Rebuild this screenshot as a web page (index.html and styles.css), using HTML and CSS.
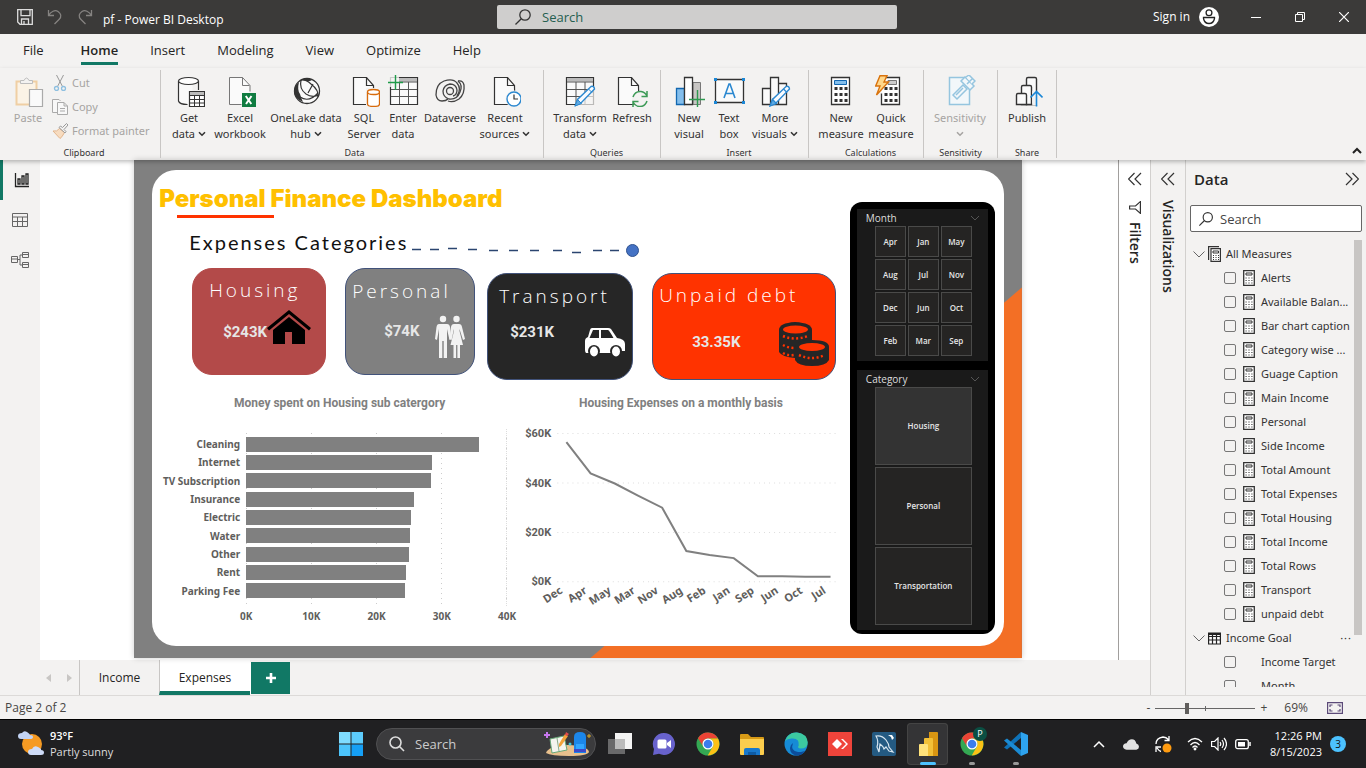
FILE: index.html
```html
<!DOCTYPE html>
<html lang="en">
<head>
<meta charset="utf-8">
<title>pf - Power BI Desktop</title>
<link rel="stylesheet" href="styles.css">
</head>
<body>
<svg class="defs" aria-hidden="true">
  <symbol id="calc" viewBox="0 0 12 16"><path d="M.7.7h10.6v14.6H.7z" fill="#fff" stroke="#333" stroke-width="1.3"/><path d="M3 3h6v2H3z" fill="none" stroke="#333"/><path d="M2.5 8h7M2.5 10.5h7M2.5 13h7" stroke="#444" stroke-width="1.2" stroke-dasharray="1.2 1.7"/></symbol>
  <symbol id="down" viewBox="0 0 8 6"><path d="M1 1.2l3 3 3-3" fill="none" stroke="currentColor" stroke-width="1.6"/></symbol>
  <symbol id="page" viewBox="0 0 32 32"><path d="M25.500 12v-1.500l-7-8h-13v27h20.500z" fill="#fafafa" stroke="#333" stroke-width="1.200"/><path d="M18.500 2.500v8h7" fill="none" stroke="#333" stroke-width="1.200"/></symbol>
  <symbol id="pencil" viewBox="0 0 22 22"><path d="M1.500 20.500l2-6L17 1.500q3-1 3.500 2.500L7 18z" fill="#f8fbff" stroke="#2b88d0" stroke-width="1.400"/><path d="M1 21l2.500-6.500 4 4z" fill="#5fa9e2" stroke="#2b88d0"/><path d="M14.500 4l3.500 3.500" stroke="#2b88d0"/></symbol>
  <symbol id="lens" viewBox="0 0 18 18"><circle cx="11" cy="7" r="5.200" fill="none" stroke="currentColor" stroke-width="1.300"/><path d="M7.300 10.700L1.500 16.500" stroke="currentColor" stroke-width="1.300"/></symbol>
  <symbol id="chrome" viewBox="0 0 24 24"><circle cx="12" cy="12" r="11.500" fill="#34a853"/><path d="M2 6.200A11.500 11.500 0 0 1 22 6.500H12A5.500 5.500 0 0 0 7.200 14.700z" fill="#ea4335"/><path d="M22 6.500A11.500 11.500 0 0 1 11.700 23.500L16.800 14.700A5.500 5.500 0 0 0 12 6.500z" fill="#fbc116"/><circle cx="12" cy="12" r="5.500" fill="#fff"/><circle cx="12" cy="12" r="4.300" fill="#3b7ded"/></symbol>
  <symbol id="chevs" viewBox="0 0 14 14"><path d="M6.500 1l-6 6 6 6M13 1L7 7l6 6" fill="none" stroke="#333" stroke-width="1.200"/></symbol>
</svg>

<header class="titlebar">
  <div class="title-left">
    <button class="tb" aria-label="Save"><svg width="16" height="16" viewBox="0 0 16 16" fill="none" stroke="#ddd" stroke-width="1.300"><path d="M.7.700h14.600v14.600H3L.700 13z"/><path d="M4 .700v6h9v-6M4.500 15v-5h7v5M7 12v3"/></svg></button>
    <button class="tb" aria-label="Undo"><svg width="16" height="16" viewBox="0 0 16 16" fill="none" stroke="#858381" stroke-width="1.300"><path d="M1.500 1v5.500H7M1.500 6.500C4 2.500 8 .500 11 2.500s4 5 1 8L7.500 15"/></svg></button>
    <button class="tb" aria-label="Redo"><svg width="16" height="16" viewBox="0 0 16 16" fill="none" stroke="#858381" stroke-width="1.300"><path d="M14.500 1v5.500H9M14.500 6.500C12 2.500 8 .500 5 2.500s-4 5-1 8L8.500 15"/></svg></button>
    <span class="doc-name">pf - Power BI Desktop</span>
  </div>
  <label class="top-search"><svg width="18" height="18"><use href="#lens"/></svg><input type="text" placeholder="Search" aria-label="Search"></label>
  <div class="title-right">
    <button class="tb signin">Sign in <svg width="20" height="20" viewBox="0 0 20 20"><circle cx="10" cy="10" r="10" fill="#fff"/><circle cx="10" cy="5.700" r="2.900" fill="none" stroke="#222" stroke-width="1.300"/><path d="M4.500 10.500h11v1q-1 5-5.500 5t-5.500-5z" fill="none" stroke="#222" stroke-width="1.300"/></svg></button>
    <button class="tb" aria-label="Minimize"><svg width="10" height="10"><path d="M0 5.500h10" stroke="#fff"/></svg></button>
    <button class="tb" aria-label="Restore"><svg width="10" height="10" fill="none" stroke="#fff"><path d="M.5 2.500h7v7h-7zM2.500 2.500v-2h7v7h-2"/></svg></button>
    <button class="tb" aria-label="Close"><svg width="10" height="10" stroke="#fff" stroke-width="1.200"><path d="M0 0l10 10M10 0L0 10"/></svg></button>
  </div>
</header>

<nav class="menu">
  <a href="#" class="file">File</a><a href="#" class="on">Home</a><a href="#">Insert</a><a href="#">Modeling</a><a href="#">View</a><a href="#">Optimize</a><a href="#">Help</a>
</nav>

<section class="ribbon">
  <div class="group clip">
    <div class="tools">
      <button class="cmd w-s off"><svg width="32" height="32" viewBox="0 0 32 32"><path d="M4.500 6.500h20v23h-20z" fill="#fbf3e6" stroke="#f0cfa4" stroke-width="2"/><path d="M8.500 8.500v-3h3.500q2.500-5 5 0h3.500v3z" fill="#f3f2f1" stroke="#bdbdbd"/><path d="M17.500 14.500h13v17h-13z" fill="#fafafa" stroke="#aaa" stroke-width="1.200"/></svg>Paste</button>
      <div class="stack">
        <button class="row off"><svg width="16" height="16" viewBox="0 0 16 16" fill="none"><path d="M4.500 0l6 11.500M11.500 0l-6 11.500" stroke="#999"/><circle cx="4.500" cy="13.500" r="2" stroke="#8dbfe0" stroke-width="1.300"/><circle cx="11.500" cy="13.500" r="2" stroke="#8dbfe0" stroke-width="1.300"/></svg>Cut</button>
        <button class="row off"><svg width="16" height="16" viewBox="0 0 16 16" fill="#f8f8f8" stroke="#aaa"><path d="M6 13.500H.5v-13h6.500l1.500 1.500"/><path d="M5.500 3.500h6.500l3.500 3.500v8.500h-10zM12 3.500v3.500h3.500M8 9.500h5M8 12h5"/></svg>Copy</button>
        <button class="row off"><svg width="16" height="16" viewBox="0 0 16 16"><path d="M1 8q4 1 6.500-2.500l5 4Q9.500 15 8 15.500z" fill="#f7dcc0" stroke="#e3b58c"/><path d="M7 4.500l6 5.500 1-1.500-2-2L16 2l-1.500-1.500-4 4-2-1.500z" fill="#f3f2f1" stroke="#999"/></svg>Format painter</button>
      </div>
    </div>
    <div class="caption">Clipboard</div>
  </div>

  <div class="group data">
    <div class="tools">
      <button class="cmd w-m"><svg width="32" height="32" viewBox="0 0 32 32"><path d="M5.500 6v20q0 3.500 10 3.500h4V6" fill="#fafafa"/><path d="M25.500 15V6M5.500 6v20q1 3.500 9 3.500" fill="none" stroke="#333" stroke-width="1.200"/><ellipse cx="15.500" cy="6" rx="10" ry="3.500" fill="#fff" stroke="#333" stroke-width="1.200"/><path d="M16.500 16.500h15v15h-15z" fill="#fff" stroke="#333" stroke-width="1.200"/><path d="M17 17h14v3H17z" fill="#bbb"/><path d="M16.500 20.500h15M16.500 24.500h15M16.500 28h15M21.500 20v11M26.500 20v11" stroke="#333"/></svg>Get<span>data <svg width="8" height="6"><use href="#down"/></svg></span></button>
      <button class="cmd w-l"><svg width="32" height="32" viewBox="0 0 32 32"><path d="M17.500 29.500h-12v-27h13l7.500 8v6" fill="#fafafa" stroke="#777"/><path d="M18.500 2.500v8h7" fill="none" stroke="#777"/><path d="M18 18h14v14H18z" fill="#107c41"/><path d="M21.800 21l5.500 8M27.500 21L22 29" stroke="#fff" stroke-width="2"/></svg>Excel<span>workbook</span></button>
      <button class="cmd w-xl"><svg width="32" height="32" viewBox="0 0 32 32"><circle cx="17" cy="16" r="12.500" fill="#fafafa" stroke="#333" stroke-width="1.300"/><path d="M9 7q-2 8 1 12 1 4 3 8-8-3-9-10 0-6 5-10z" fill="#333"/><path d="M11 5q6-4 11 0-3 2-6 1-3-1-5-1z" fill="#333"/><path d="M11 5q-2 9 5 14 6 4 13 1M10 22q9 6 18-4M11 5q5-1 10 4 8 6 7 13M18 18l5-9" fill="none" stroke="#333" stroke-width="1.200"/></svg>OneLake data<span>hub <svg width="8" height="6"><use href="#down"/></svg></span></button>
      <button class="cmd w-s"><svg width="32" height="32" viewBox="0 0 32 32"><use href="#page"/><path d="M18 13h15v19H18z" fill="#f3f2f1"/><path d="M19.500 17v12q0 2.500 6 2.500t6-2.500V17" fill="#fff" stroke="#d86b0c" stroke-width="1.300"/><ellipse cx="25.500" cy="17" rx="6" ry="2.500" fill="#fff" stroke="#d86b0c" stroke-width="1.300"/></svg>SQL<span>Server</span></button>
      <button class="cmd w-s"><svg width="32" height="32" viewBox="0 0 32 32"><path d="M3.500 2.500h27v27h-27z" fill="#fafafa" stroke="#333" stroke-width="1.200"/><path d="M12 3h18v3.500H12z" fill="#bbb"/><path d="M12 7h18M4 14.500h26M4 21.500h26M12.500 8v21M21.500 7v22" stroke="#555"/><path d="M0 0h12v12H0z" fill="#f3f2f1" opacity=".8"/><path d="M8.500 0v15M1 7.500h15" stroke="#1f9a49" stroke-width="1.400"/></svg>Enter<span>data</span></button>
      <button class="cmd w-l"><svg width="32" height="32" viewBox="0 0 32 32" fill="none" stroke="#444" stroke-width="1.300"><circle cx="16" cy="16" r="3.500"/><path d="M24 6q5 4 2 11-3 8-11 7-6-2-6-8 1-6 7-7 6 0 7 6 0 5-4 6"/><path d="M8 26q-5 0-6-6Q2 9 10 6q9-3 13 2 5 6 0 13"/><path d="M24 6q5-1 6 4 1 9-5 14-6 4-11 2M8 26q4 0 6-2"/></svg>Dataverse</button>
      <button class="cmd w-l"><svg width="32" height="32" viewBox="0 0 32 32"><use href="#page"/><circle cx="25" cy="24" r="8.500" fill="#f3f2f1"/><circle cx="25" cy="24" r="7" fill="#fff" stroke="#2b88d0" stroke-width="1.400"/><path d="M25 19.500V24h4" fill="none" stroke="#333" stroke-width="1.200"/></svg>Recent<span>sources <svg width="8" height="6"><use href="#down"/></svg></span></button>
    </div>
    <div class="caption">Data</div>
  </div>

  <div class="group queries">
    <div class="tools">
      <button class="cmd w-l"><svg width="32" height="32" viewBox="0 0 32 32"><path d="M2.500 2.500h27v27h-27z" fill="#fafafa" stroke="#333" stroke-width="1.200"/><path d="M3 3h26v3.500H3z" fill="#bbb"/><path d="M3 7h26M3 14.500h26M3 21.500h26M12 7v22M21 7v22" stroke="#555"/><path d="M14 27l12-13h6v18H14z" fill="#f3f2f1" opacity=".7"/><svg x="10" y="10" width="22" height="22"><use href="#pencil"/></svg></svg>Transform<span>data <svg width="8" height="6"><use href="#down"/></svg></span></button>
      <button class="cmd w-s"><svg width="32" height="32" viewBox="0 0 32 32"><use href="#page" x="-3"/><circle cx="24" cy="24" r="8" fill="#f3f2f1"/><path d="M17 22q2-6 8-5.500 4 .500 6 4.500M31 26q-2 6-8 5.500-4-.500-6-4.500M31 16v5.500h-5.500M17 32v-5.500h5.500" fill="none" stroke="#3c9a56" stroke-width="1.500"/></svg>Refresh</button>
    </div>
    <div class="caption">Queries</div>
  </div>

  <div class="group insert">
    <div class="tools">
      <button class="cmd w-s"><svg width="32" height="32" viewBox="0 0 32 32"><path d="M3.500 13.500h8v16h-8z" fill="#83beec" stroke="#1267b0" stroke-width="1.300"/><path d="M20 7.500h7.500v22H20z" fill="#c8c6c4" stroke="#777"/><path d="M11.500 2.500h8v27h-8z" fill="#fff" stroke="#333" stroke-width="1.300"/><path d="M24.500 15v17M16 24.500h17" stroke="#2e9a50" stroke-width="1.400"/></svg>New<span>visual</span></button>
      <button class="cmd w-s"><svg width="32" height="32" viewBox="0 0 32 32"><path d="M2.500 4.500h28v23h-28z" fill="#fafafa" stroke="#333" stroke-width="1.300"/><path d="M1 3h3v3H1zM29 3h3v3h-3zM1 26h3v3H1zM29 26h3v3h-3z" fill="#1b87d6"/><path d="M11 23l5-14h1l5 14M12.500 18.500h8" fill="none" stroke="#2b88d0" stroke-width="1.600"/></svg>Text<span>box</span></button>
      <button class="cmd w-l"><svg width="32" height="32" viewBox="0 0 32 32" fill="#fafafa" stroke="#333" stroke-width="1.300"><path d="M3.500 13.500h8v16h-8zM19.500 8.500h8v21h-8zM11.500 2.500h8v27h-8z"/><svg x="10" y="10" width="22" height="22"><use href="#pencil"/></svg></svg>More<span>visuals <svg width="8" height="6"><use href="#down"/></svg></span></button>
    </div>
    <div class="caption">Insert</div>
  </div>

  <div class="group calcs">
    <div class="tools">
      <button class="cmd w-m"><svg width="32" height="32" viewBox="0 0 32 32"><path d="M6.500 2.500h18v27h-18z" fill="#fff" stroke="#333" stroke-width="1.300"/><path d="M9.500 5.500h12v4h-12z" fill="#83beec" stroke="#1267b0"/><path d="M9.500 13.500h13M9.500 19.500h13M9.500 25.500h13" stroke="#333" stroke-width="3" stroke-dasharray="3 2"/></svg>New<span>measure</span></button>
      <button class="cmd w-m"><svg width="32" height="32" viewBox="0 0 32 32"><path d="M8.500 2.500h16v27h-18v-11" fill="#fff" stroke="#333" stroke-width="1.300"/><path d="M13 5.500h8.500v4H13z" fill="#ccc" stroke="#777"/><path d="M9.500 13.500h13M9.500 19.500h13M9.500 25.500h13" stroke="#333" stroke-width="3" stroke-dasharray="3 2"/><path d="M5 .700h7L9 7h4.500L1.500 20 5 11H.700z" fill="#ffd78a" stroke="#d9730d" stroke-width="1.400"/></svg>Quick<span>measure</span></button>
    </div>
    <div class="caption">Calculations</div>
  </div>

  <div class="group sens">
    <div class="tools">
      <button class="cmd w-l off"><svg width="32" height="32" viewBox="0 0 32 32" fill="#f2f7fa" stroke="#95c5df" stroke-width="1.500"><path d="M5.500 2.500h20v27h-20z"/><path d="M9 20L19 10l4 4-10 10zM12 20l7-7"/><path d="M17 6l4-4 9 9-4 4z"/><path d="M22 2l3-2 6 6-3 3M23 9l5-5" /></svg>Sensitivity<span><svg width="8" height="6"><use href="#down"/></svg></span></button>
    </div>
    <div class="caption">Sensitivity</div>
  </div>

  <div class="group share">
    <div class="tools">
      <button class="cmd w-s"><svg width="32" height="32" viewBox="0 0 32 32" fill="#fafafa" stroke="#333" stroke-width="1.400"><path d="M15.500 29.500V4q0-1.500 1.500-1.500h7q1.500 0 1.500 1.500v25.500z"/><path d="M10.500 29.500V12q0-1.500 1.500-1.500h7q1.500 0 1.500 1.500v17.500z"/><path d="M5.500 29.500V20q0-1.500 1.500-1.500h7q1.500 0 1.500 1.500v9.500z"/><path d="M21.200 16h10v14h-10z" fill="#f3f2f1" stroke="none"/><path d="M25.500 31.500V17M19.500 22.500l6-6 6 6" fill="none" stroke="#1b87d6" stroke-width="1.600"/></svg>Publish</button>
    </div>
    <div class="caption">Share</div>
  </div>
  <button class="collapse" aria-label="Collapse ribbon"><svg width="10" height="7"><path d="M1 6l4-4 4 4" fill="none" stroke="#222" stroke-width="2"/></svg></button>
</section>

<main class="work">
  <div class="left">
    <div class="upper">
      <nav class="rail">
        <button class="on" aria-label="Report view"><svg width="16" height="16" viewBox="0 0 16 16" fill="none" stroke="#222" stroke-width="1.300"><path d="M1.500 1v13.500H15M4 7h2v5H4zM8 4h2v8H8zM12 2h2v10h-2z"/></svg></button>
        <button aria-label="Table view"><svg width="16" height="16" viewBox="0 0 16 16" fill="none" stroke="#666"><path d="M.5 1.500h15v13H.5zM.5 5h15M.5 9.500h15M5.500 5v9.500M10.500 5v9.500"/></svg></button>
        <button aria-label="Model view"><svg width="18" height="18" viewBox="0 0 18 18" fill="none" stroke="#666"><path d="M.5 5.500h6v6h-6zM.5 8h6M11.500 1.500h6v5h-6zM11.500 11.500h6v5h-6zM11.500 3.500h6M11.500 13.500h6M6.500 8.500H9M11.500 4H9v10h2.500"/></svg></button>
      </nav>
      <div class="canvas">
        <article class="report">
          <div class="sheet">
            <div class="content">
              <h1>Personal Finance Dashboard</h1>
              <div class="rule"></div>
              <div class="sub"><h2>Expenses Categories</h2>
                <svg width="230" height="32" viewBox="0 0 230 32"><path d="M1 21.500h9M19 21.500h9M37 20.500h9M57 21.500h9M78 22.500h9M98 22.500h9M119 22.500h9M142 22.500h9M161 24.500h9M182 22.500h9M199 22.500h9" stroke="#2b4570" stroke-width="1.600"/><circle cx="221.500" cy="22.500" r="6" fill="#4472c4" stroke="#2f528f"/></svg></div>
              <div class="kpis">
                <section class="kpi housing"><h3>Housing</h3><div class="val"><b>$243K</b><svg width="44" height="36" viewBox="0 0 44 36"><path d="M22 0L0 18l2 2.500L22 4l20 16.500 2-2.500zM22 7L6 20v14h12V22h7v12h13V20z"/></svg></div></section>
                <section class="kpi personal"><h3>Personal</h3><div class="val"><b>$74K</b><svg width="30" height="44" viewBox="0 0 30 44" fill="#f2f2f2"><circle cx="8" cy="4" r="3.200"/><path d="M4 9h8q2.500 0 3 3l1.500 12-2 1L12 14v29H8.700V26H7.300v17H4V14L2 25l-2-1 1.500-12Q2 9 4 9z"/><circle cx="21.500" cy="4" r="3.200"/><path d="M19 9h5q2.500 0 3 3l3 12-2 1-3.500-11v2l3.500 14h-3v13h-2.600V30h-1.300v13H18.500V30h-3L19 16v-2l-2.500 11-2-1L16 12q.500-3 3-3z"/></svg></div></section>
                <section class="kpi transport"><h3>Transport</h3><div class="val"><b>$231K</b><svg width="40" height="30" viewBox="0 0 40 30"><path d="M7 1h16q2 0 3 1l6 9q8 1 8 6v7h-5v2H1q-1-1-1-3v-9q0-3 3-4L5 3q.500-2 2-2z" fill="#fff"/><path d="M8 3h6v8H4.500zM16 3h7q1 0 5.500 8H16z" fill="#262626"/><circle cx="9" cy="24" r="6" fill="#262626"/><circle cx="31" cy="24" r="6" fill="#262626"/><ellipse cx="9" cy="24.500" rx="4" ry="5" fill="#fff"/><ellipse cx="31" cy="24.500" rx="4" ry="5" fill="#fff"/></svg></div></section>
                <section class="kpi debt"><h3>Unpaid debt</h3><div class="val"><b>33.35K</b><svg width="50" height="44" viewBox="0 0 50 44"><g fill="#262626"><path d="M0 8q0-7 16-8 17 1 17 8v20q-5 8-17 8Q3 35 0 30z"/><path d="M16 25q0-7 17-7t17 7v13q-3 6-17 6t-17-6z"/></g><g fill="#ff3300"><ellipse cx="16.500" cy="7.500" rx="12.500" ry="4"/><ellipse cx="33" cy="25" rx="13" ry="4"/></g><path d="M4 14q12 5 25 0M4 23q5 3 12 3M4 31q5 3 11 2M20 33q13 6 26 0" fill="none" stroke="#ff3300" stroke-width="2.500" stroke-dasharray="2 2.500"/></svg></div></section>
              </div>
              <div class="charts">
                <figure class="bars">
                  <figcaption>Money spent on Housing sub catergory</figcaption>
                  <div class="plot">
                    <div class="names"><span>Cleaning</span><span>Internet</span><span>TV Subscription</span><span>Insurance</span><span>Electric</span><span>Water</span><span>Other</span><span>Rent</span><span>Parking Fee</span></div>
                    <div class="area"><i style="width:89.5%"></i><i style="width:71.7%"></i><i style="width:71.3%"></i><i style="width:64.7%"></i><i style="width:63.3%"></i><i style="width:63%"></i><i style="width:62.5%"></i><i style="width:61.5%"></i><i style="width:61.1%"></i></div>
                  </div>
                  <div class="axis"><span>0K</span><span>10K</span><span>20K</span><span>30K</span><span>40K</span></div>
                </figure>
                <figure class="trend">
                  <figcaption>Housing Expenses on a monthly basis</figcaption>
                  <svg viewBox="0 0 325 190">
                    <path d="M39 13.500h280M39 62.500h280M39 111.500h280M39 160.500h280" stroke="#ddd" stroke-dasharray="1 4"/>
                    <path d="M48 22l24 31 24 10 23 12 24 12 24 43 23 4 24 3 24 18h24l23 .500h25" fill="none" stroke="#808080" stroke-width="2"/>
                    <g class="yt"><text x="33" y="17">$60K</text><text x="33" y="66">$40K</text><text x="33" y="115">$20K</text><text x="33" y="164">$0K</text></g>
                    <g class="xt"><text transform="translate(45 171) rotate(-33)">Dec</text><text transform="translate(69 171) rotate(-33)">Apr</text><text transform="translate(93 171) rotate(-33)">May</text><text transform="translate(117 171) rotate(-33)">Mar</text><text transform="translate(140 171) rotate(-33)">Nov</text><text transform="translate(164 171) rotate(-33)">Aug</text><text transform="translate(187 171) rotate(-33)">Feb</text><text transform="translate(211 171) rotate(-33)">Jan</text><text transform="translate(235 171) rotate(-33)">Sep</text><text transform="translate(259 171) rotate(-33)">Jun</text><text transform="translate(283 171) rotate(-33)">Oct</text><text transform="translate(306 171) rotate(-33)">Jul</text></g>
                  </svg>
                </figure>
              </div>
            </div>
            <aside class="slicers">
              <section class="slicer"><header>Month<svg width="10" height="6"><path d="M1 1l4 4 4-4" fill="none" stroke="#555"/></svg></header>
                <div class="months"><button>Apr</button><button>Jan</button><button>May</button><button>Aug</button><button>Jul</button><button>Nov</button><button>Dec</button><button>Jun</button><button>Oct</button><button>Feb</button><button>Mar</button><button>Sep</button></div></section>
              <section class="slicer grow"><header>Category<svg width="10" height="6"><path d="M1 1l4 4 4-4" fill="none" stroke="#555"/></svg></header>
                <div class="cats"><button class="on">Housing</button><button>Personal</button><button>Transportation</button></div></section>
            </aside>
          </div>
        </article>
      </div>
      <aside class="pane filters"><button aria-label="Expand filters"><svg width="14" height="14"><use href="#chevs"/></svg></button>
        <svg width="12" height="13" viewBox="0 0 12 13"><path d="M11.400.600v11.800L6.500 8H.6V5h5.900z" fill="none" stroke="#333" stroke-width="1.200"/></svg><h2>Filters</h2></aside>
    </div>
    <nav class="pages">
      <div class="arrows"><button aria-label="Previous page"><svg width="5" height="8"><path d="M5 0v8L0 4z" fill="#c8c6c4"/></svg></button><button aria-label="Next page"><svg width="5" height="8"><path d="M0 0v8l5-4z" fill="#c8c6c4"/></svg></button></div>
      <button class="tab inc">Income</button><button class="tab exp">Expenses</button><button class="add" aria-label="New page"><svg width="10" height="10"><path d="M5 0v10M0 5h10" stroke="#fff" stroke-width="2.600"/></svg></button>
    </nav>
  </div>
  <aside class="pane viz"><button aria-label="Expand visualizations"><svg width="14" height="14"><use href="#chevs"/></svg></button><h2>Visualizations</h2></aside>
  <aside class="datapane">
    <header><h2>Data</h2><button aria-label="Collapse data"><svg class="flip" width="14" height="14"><use href="#chevs"/></svg></button></header>
    <label class="find"><svg width="16" height="16"><use href="#lens"/></svg><input type="text" placeholder="Search" aria-label="Search fields"></label>
    <div class="treewrap">
      <div class="tree">
        <div class="node"><svg class="tw" width="12" height="7"><path d="M.5.500L6 6l5.500-5.500" fill="none" stroke="#666"/></svg><svg width="13" height="16" viewBox="0 0 13 16"><path d="M.6 14V.600H11" fill="none" stroke="#333" stroke-width="1.200"/><path d="M3 2.700h9.400v12.700H3z" fill="#fff" stroke="#333" stroke-width="1.200"/><path d="M5 5h5.500v2H5z" fill="none" stroke="#333"/><path d="M5 9.500h6M5 11.500h6M5 13.500h6" stroke="#333" stroke-dasharray="1 1.500"/></svg>All Measures</div>
        <label><input type="checkbox"><svg width="12" height="16"><use href="#calc"/></svg>Alerts</label>
        <label><input type="checkbox"><svg width="12" height="16"><use href="#calc"/></svg>Available Balan...</label>
        <label><input type="checkbox"><svg width="12" height="16"><use href="#calc"/></svg>Bar chart caption</label>
        <label><input type="checkbox"><svg width="12" height="16"><use href="#calc"/></svg>Category wise ...</label>
        <label><input type="checkbox"><svg width="12" height="16"><use href="#calc"/></svg>Guage Caption</label>
        <label><input type="checkbox"><svg width="12" height="16"><use href="#calc"/></svg>Main Income</label>
        <label><input type="checkbox"><svg width="12" height="16"><use href="#calc"/></svg>Personal</label>
        <label><input type="checkbox"><svg width="12" height="16"><use href="#calc"/></svg>Side Income</label>
        <label><input type="checkbox"><svg width="12" height="16"><use href="#calc"/></svg>Total Amount</label>
        <label><input type="checkbox"><svg width="12" height="16"><use href="#calc"/></svg>Total Expenses</label>
        <label><input type="checkbox"><svg width="12" height="16"><use href="#calc"/></svg>Total Housing</label>
        <label><input type="checkbox"><svg width="12" height="16"><use href="#calc"/></svg>Total Income</label>
        <label><input type="checkbox"><svg width="12" height="16"><use href="#calc"/></svg>Total Rows</label>
        <label><input type="checkbox"><svg width="12" height="16"><use href="#calc"/></svg>Transport</label>
        <label><input type="checkbox"><svg width="12" height="16"><use href="#calc"/></svg>unpaid debt</label>
        <div class="node"><svg class="tw" width="12" height="7"><path d="M.5.500L6 6l5.500-5.500" fill="none" stroke="#666"/></svg><svg width="13" height="13" viewBox="0 0 13 13" fill="#fff" stroke="#222" stroke-width="1.200"><path d="M.6 1h11.800v11H.600zM.600 4.500h11.800M.600 8h11.800M4.500 1v11M8.500 1v11"/><path d="M1 2h11" stroke-width="2"/></svg>Income Goal<span class="dots">···</span></div>
        <label><input type="checkbox"><svg width="12" height="16"></svg>Income Target</label>
        <label><input type="checkbox"><svg width="12" height="16"></svg>Month</label>
      </div>
      <div class="scroll"></div>
    </div>
  </aside>
</main>

<footer class="status">
  <span>Page 2 of 2</span>
  <div class="zoom"><button aria-label="Zoom out">-</button><input type="range" min="10" max="200" value="69" aria-label="Zoom"><button aria-label="Zoom in">+</button><span class="pct">69%</span><button aria-label="Fit to page"><svg width="16" height="12" fill="none" stroke="#5b4a78" stroke-width="1.200"><path d="M.6.600h14.800v10.800H.600z"/><path d="M3 5V3h2.500M10.500 3H13v2M13 7v2h-2.500M5.500 9H3V7"/></svg></button></div>
</footer>

<footer class="taskbar">
  <div class="weather"><svg width="26" height="26" viewBox="0 0 26 26"><circle cx="14" cy="13" r="10" fill="#f59a23"/><path d="M3 8q-3 0-3-3t4-3q2-3 5-1t3 3q3 0 3 2t-3 2z" fill="#c3d4f5"/><path d="M13 24q-3 0-3-3t4-3q2-4 6-2t3 3q3 0 3 2.500T23 24z" fill="#cfdcf8"/></svg><p><b>93°F</b><br>Partly sunny</p></div>
  <div class="apps">
    <button class="start" aria-label="Start"><svg width="24" height="24" viewBox="0 0 24 24"><path d="M0 0h11.500v11.500H0z" fill="#7fdcff"/><path d="M12.500 0H24v11.500H12.500z" fill="#5ccbfb"/><path d="M0 12.500h11.500V24H0z" fill="#4cc4fb"/><path d="M12.500 12.500H24V24H12.500z" fill="#159ff5"/></svg></button>
    <label class="task-search"><svg width="16" height="16" viewBox="0 0 16 16" fill="none" stroke="#ddd" stroke-width="1.600"><circle cx="6.500" cy="6.500" r="5.500"/><path d="M10.500 10.500L15 15"/></svg><input type="text" placeholder="Search" aria-label="Search Windows"><svg width="48" height="26" viewBox="0 0 48 26"><path d="M2 22q2-7 22-8 20 1 21 7-2 4-20 4T2 22z" fill="#e8c08d"/><path d="M6 8l14-3 3 14-15 3z" fill="#f4f4ee" stroke="#69a978"/><path d="M13 7l2 13" stroke="#8a8"/><path d="M21 3l3 2-7 10-2 1v-3z" fill="#f2a23a"/><path d="M22 1l3 2-2 2-2-1z" fill="#e34b4b"/><path d="M30 6q0-5 6-5t6 5v16H30z" fill="#1c87ea"/><path d="M32 13h8v8h-8z" fill="#32a6ff"/><path d="M30 18h12v3H30z" fill="#3d48c8"/><path d="M3 1v6M0 4h6" stroke="#c778ee" stroke-width="2"/><path d="M45 3v4M43 5h4" stroke="#e0ae26"/><circle cx="26" cy="13" r="1.500" fill="#3bc6df"/></svg></label>
    <button aria-label="Task view"><svg width="24" height="24" viewBox="0 0 24 24"><path d="M7 1h17v16H7z" fill="#f4f4f4"/><path d="M0 7h17v15H0z" fill="#777" opacity=".85"/><path d="M7 7h10v10H7z" fill="#bbb"/></svg></button>
    <button aria-label="Chat"><svg width="24" height="24" viewBox="0 0 24 24"><path d="M12 1a11 11 0 1 1-5 20.800L1 23l1-6A11 11 0 0 1 12 1z" fill="#6862cc"/><rect x="5.500" y="7.500" width="9" height="9" rx="1.500" fill="#fff"/><path d="M15 11l4-3v8l-4-3z" fill="#fff"/></svg></button>
    <button aria-label="Chrome"><svg width="24" height="24"><use href="#chrome"/></svg></button>
    <button aria-label="File Explorer"><svg width="24" height="24" viewBox="0 0 24 24"><path d="M0 3q0-1 1-1h7l3 3h12q1 0 1 1v3H0z" fill="#d79a16"/><path d="M0 7h24v15q0 1-1 1H1q-1 0-1-1z" fill="#fccd4d"/><path d="M4 23v-5q0-2 2-2h12q2 0 2 2v5z" fill="#1878cc"/><path d="M8 23v-3h8v3z" fill="#0e5ba5"/></svg></button>
    <button aria-label="Edge"><svg width="24" height="24" viewBox="0 0 24 24"><circle cx="12" cy="12" r="11.500" fill="#168bd6"/><path d="M1 9Q4 0 13 .5q10 1 10.700 10 0 6-7 6-4-.500-2-3 1-7-6-7Q4 6 1 9z" fill="#3cc9a0"/><path d="M9 11q-3 8 5 9 6 0 8-2-4 6-10 5.500Q6 22 6 16q0-3 3-5z" fill="#0c4d9b"/></svg></button>
    <button aria-label="AnyDesk"><svg width="24" height="24" viewBox="0 0 24 24"><path d="M0 0h24v24H0z" fill="#ef443b"/><path d="M9 7l5 5-5 5-5-5z" fill="#fff"/><path d="M13 7h2l5 5-5 5h-2l5-5z" fill="#fff"/></svg></button>
    <button aria-label="MySQL Workbench"><svg width="24" height="24" viewBox="0 0 24 24"><rect width="24" height="24" rx="2" fill="#245a82"/><path d="M4 4q6-1 10 4 3 4 3 7l4 5-4-1-3-4-2 2q-1-3-4-5l-1 8-2-5Q7 9 4 4z" fill="none" stroke="#d8e6f0" stroke-width="1.200"/><path d="M16 3l3 2 1 3 2-2-2-3z" fill="#fff"/></svg></button>
    <button class="active" aria-label="Power BI"><svg width="24" height="24" viewBox="0 0 24 24"><path d="M13 0h8q1 0 1 1v23h-9z" fill="#d99612"/><path d="M8 7q0-1 1-1h7q1 0 1 1v17H8z" fill="#f2c037"/><path d="M3 13q0-1 1-1h7q1 0 1 1v11H3z" fill="#ffe27a"/></svg></button>
    <button class="open" aria-label="Chrome profile P"><svg width="30" height="36" viewBox="0 0 30 36"><svg x="3" y="6" width="24" height="24"><use href="#chrome"/></svg><circle cx="23" cy="8" r="7" fill="#0b4f43"/><text x="23" y="11" class="pf">P</text></svg></button>
    <button class="open" aria-label="VS Code"><svg width="24" height="24" viewBox="0 0 24 24"><path d="M17 0l7 3v18l-7 3z" fill="#2ea3ee"/><path d="M17 0v6L3 17.500 0 15.500z" fill="#0e72b8"/><path d="M17 24v-6L3 6.500 0 8.500z" fill="#1b8bd4"/></svg></button>
  </div>
  <div class="tray">
    <svg width="12" height="8"><path d="M1 7l5-5 5 5" fill="none" stroke="#fff" stroke-width="1.500"/></svg>
    <svg class="cloud" width="16" height="11" viewBox="0 0 18 12"><path d="M4 12q-4-1-4-4t4-3.500Q6 0 10 0t5 5q3 1 3 3.500T15 12z" fill="#e2e2e2"/></svg>
    <svg width="18" height="18" viewBox="0 0 18 18" fill="none" stroke="#fff" stroke-width="1.300"><path d="M2 9q0-6 7-7 3 0 6 3M15 1v4.500h-4.500M2 17v-5h5M3 13q2 3 4 3.500"/><circle cx="13" cy="13" r="4.500" fill="#ff9b10" stroke="none"/></svg>
    <svg width="16" height="14" viewBox="0 0 16 14" fill="none" stroke="#fff" stroke-width="1.300"><path d="M1 5q7-7 14 0M3.500 8q4.500-5 9 0M5.500 10.500q2.500-3 5 0"/><circle cx="8" cy="12" r=".8"/></svg>
    <svg width="16" height="14" viewBox="0 0 16 14" fill="none" stroke="#fff" stroke-width="1.200"><path d="M.6 4.500h3L7 1v12L3.600 9.500h-3zM9 5q1.500 2 0 4M11 3q3 4 0 8M13 1q5 6 0 12"/></svg>
    <svg width="16" height="12" viewBox="0 0 16 12"><rect x=".7" y="1.700" width="12.600" height="9" rx="2" fill="none" stroke="#fff" stroke-width="1.300"/><path d="M3 4h7v4.500H3z" fill="#fff"/><path d="M15 4v4" stroke="#fff" stroke-width="1.500"/></svg>
    <p>12:26 PM<br>8/15/2023</p><span class="count">3</span>
  </div>
</footer>
</body>
</html>
```
FILE: styles.css
```css
* { box-sizing: border-box; }
body { margin: 0; height: 100vh; display: flex; flex-direction: column; overflow: hidden; background: #f3f2f1; color: #333; font: 12px/16px "Open Sans", "Noto Sans", sans-serif; }
button { border: 0; padding: 0; background: none; color: inherit; font: inherit; }
input { font: inherit; color: inherit; border: 0; outline: 0; background: none; min-width: 0; padding: 0; }
h1, h2, h3, p, figure { margin: 0; }
a { color: inherit; text-decoration: none; }
svg { flex: none; display: block; }
.defs { position: absolute; width: 0; height: 0; }
.flip { transform: scaleX(-1); }

.titlebar { flex: none; height: 34px; display: grid; grid-template-columns: 497px minmax(200px, 400px) 1fr; align-items: center; background: #3b3a39; color: #fff; }
.title-left { display: flex; align-items: center; gap: 14px; padding-left: 17px; }
.doc-name { padding-top: 6px; margin-left: -4px; white-space: nowrap; }
.top-search { height: 24px; display: flex; align-items: center; gap: 10px; padding-left: 17px; border-radius: 2px; background: #cfcecd; color: #333; font-size: 13px; }
.top-search input::placeholder { color: #255f50; opacity: 1; }
.title-right { display: flex; justify-content: flex-end; align-items: center; gap: 34px; padding-right: 17px; }
.signin { display: flex; align-items: center; gap: 9px; margin-right: -2px; }

.menu { flex: none; height: 34px; display: flex; gap: 32px; padding: 4px 0 0 23px; font-size: 13px; color: #252423; }
.menu a { height: 27px; line-height: 24px; }
.menu .file { margin-right: 5px; }
.menu .on { font-weight: 600; border-bottom: 3px solid #117865; }

.ribbon { flex: none; height: 92px; display: flex; padding: 2px 4px 0 8px; position: relative; z-index: 2; box-shadow: 0 2px 4px rgba(0,0,0,.25); font: 11px/16px "Noto Sans", sans-serif; }
.group { height: 88px; display: flex; flex-direction: column; justify-content: space-between; border-right: 1px solid #c8c6c4; }
.tools { display: flex; gap: 1px; padding-top: 5px; }
.caption { text-align: center; font-size: 9px; line-height: 10px; }
.cmd { display: flex; flex-direction: column; align-items: center; white-space: nowrap; }
.cmd > svg { margin-bottom: 3px; }
.cmd span { display: flex; align-items: center; gap: 3px; height: 16px; }
.off { color: #a6a4a2; }
.w-s { width: 38px; }
.w-m { width: 46px; }
.w-l { width: 54px; }
.w-xl { width: 76px; }
.clip { width: 153px; }
.clip .cmd { margin-left: 1px; }
.stack { display: flex; flex-direction: column; gap: 8px; }
.row { display: flex; align-items: center; gap: 4px; height: 16px; white-space: nowrap; margin-left: 4px; }
.data { width: 383px; padding-left: 5px; }
.queries { width: 117px; padding-left: 9px; }
.queries .tools { gap: 6px; }
.insert { width: 148px; padding-left: 9px; }
.insert .tools { gap: 2px; }
.insert .w-l { width: 50px; }
.calcs { width: 115px; padding-left: 9px; }
.calcs .tools { gap: 4px; }
.sens { width: 74px; padding: 0 9px; }
.share { width: 59px; padding: 0 10px; }
.collapse { margin: auto 0 6px auto; }

.work { flex: 1; min-height: 0; display: flex; }
.left { flex: 1; min-width: 0; display: flex; flex-direction: column; }
.upper { flex: 1; min-height: 0; display: flex; }
.rail { width: 40px; display: flex; flex-direction: column; }
.rail button { height: 40px; display: grid; place-items: center; }
.rail .on { border-left: 3px solid #117865; }
.canvas { flex: 1; min-width: 0; display: flex; justify-content: center; background: #fff; padding: 0 2px 2px 0; }
.report { width: 82.5%; display: flex; padding: 10px 18px 12px; position: relative; z-index: 0; background: #808080; box-shadow: 0 0 6px rgba(0,0,0,.2); }
.report::before { content: ""; position: absolute; inset: 0; z-index: -1; background: #f36f25; clip-path: polygon(100% 25.6%, 100% 100%, 51.4% 100%); }
.sheet { flex: 1; min-width: 0; display: grid; grid-template-columns: minmax(0, 1fr) 145px; padding: 0 9px 0 7px; border-radius: 24px; background: #fff; }
.content { padding-top: 15px; }
h1 { font: 900 24px/28px Inter, sans-serif; color: #ffc000; white-space: nowrap; }
.rule { width: 97px; height: 3px; margin: 2px 0 0 18px; background: #ff3300; }
.sub { display: flex; height: 28px; margin: 10px 0 12px 30px; }
.sub h2 { font: 400 20px/28px Lato, sans-serif; letter-spacing: 2px; color: #111; width: 222px; white-space: nowrap; }
.kpis { display: flex; align-items: flex-start; margin-left: 33px; }
.kpi { height: 107px; border-radius: 20px; color: #fff; border: 1px solid #41527a; }
.kpi h3 { font: 300 19px/24px "Open Sans", sans-serif; letter-spacing: 3px; white-space: nowrap; }
.kpi b { font: 700 15px/20px Roboto, sans-serif; color: #e6e6e6; }
.val { display: flex; align-items: flex-start; justify-content: space-between; }
.housing { width: 134px; margin-right: 19px; padding: 9px 14px 0 16px; background: #b34a49; border-color: #b34a49; }
.housing .val { padding: 8px 0 0 14px; }
.housing b { padding-top: 12px; }
.personal { width: 130px; margin-right: 12px; padding: 10px 9px 0 6px; background: #808080; }
.personal .val { padding: 12px 0 0 32px; }
.personal b { padding-top: 6px; }
.transport { width: 146px; margin: 5px 19px 0 0; padding: 10px 7px 0 11px; background: #262626; }
.transport .val { padding: 14px 0 0 11px; }
.transport svg { margin-top: 5px; }
.debt { width: 184px; margin-top: 5px; padding: 9px 6px 0 6px; background: #ff3300; }
.debt .val { padding: 15px 0 0 33px; }
.debt b { padding-top: 10px; }
.charts { display: grid; grid-template-columns: 350fr 335fr; margin-top: 13px; font-family: "Noto Sans", sans-serif; color: #605e5c; }
figcaption { text-align: center; font: 700 12px/20px Roboto, sans-serif; color: #808080; }
.bars { font-weight: 700; font-size: 10px; }
.bars figcaption { padding-left: 8px; }
.plot { display: flex; margin-top: 16px; height: 177px; padding-right: 5px; }
.names { width: 81px; margin-right: 6px; padding: 6px 0; text-align: right; display: grid; grid-template-rows: repeat(9, 1fr); align-items: center; white-space: nowrap; }
.area { flex: 1; padding: 6px 0; display: grid; grid-template-rows: repeat(9, 1fr); align-items: center; background: repeating-linear-gradient(#fff 0 4px, transparent 4px 5px), repeating-linear-gradient(90deg, #ccc 0 1px, #fff 1px 25%); border-right: 1px dotted #ddd; }
.area i { height: 15px; background: #808080; }
.axis { display: flex; justify-content: space-between; padding: 2px 0 0 72px; margin-right: -10px; }
.axis span { width: 30px; text-align: center; }
.trend svg { width: 97%; margin: 7px 0 0 6px; }
.yt { font: 700 11px Roboto, sans-serif; fill: #605e5c; text-anchor: end; }
.xt { font: 700 11px "Noto Sans", sans-serif; fill: #605e5c; text-anchor: end; }
.slicers { margin: 32px 0 12px; padding: 7px 7px 4px; display: flex; flex-direction: column; gap: 9px; border-radius: 12px; background: #000; color: #ddd; }
.slicer { display: flex; flex-direction: column; background: #1a1a1a; padding: 0 16px 5px 18px; }
.grow { flex: 1; }
.slicer header { display: flex; justify-content: space-between; height: 17px; line-height: 18px; margin: 0 -8px 0 -9px; font-size: 10px; }
.slicer header svg { margin-top: 6px; }
.months { display: grid; grid-template-columns: repeat(3, 1fr); grid-auto-rows: 31px; gap: 2px; }
.cats { flex: 1; display: grid; grid-template-rows: repeat(3, 1fr); gap: 2px; }
.slicer button { border: 1px solid #4a4a49; background: #252423; font-size: 8px; font-weight: 600; color: #e6e6e6; }
.slicer .on { background: #333; }

.pane { display: flex; flex-direction: column; align-items: center; padding-top: 12px; border-left: 1px solid #d2d0ce; }
.pane h2 { writing-mode: vertical-rl; font-size: 14px; line-height: 20px; font-weight: 600; color: #252423; }
.filters { width: 32px; background: #fff; border-left-color: #a19f9d; }
.filters > svg { margin: 15px 0 8px; }
.viz { width: 35px; }
.viz h2 { margin-top: 14px; }
.pages { height: 35px; display: flex; padding-left: 40px; color: #252423; }
.arrows { width: 39px; display: flex; justify-content: space-between; padding: 0 7px 0 6px; }
.tab { border-left: 1px solid #c8c6c4; }
.inc { width: 80px; }
.exp { width: 91px; background: #fff; border-bottom: 4px solid #117865; padding-top: 4px; }
.add { width: 40px; margin: 2px 0 1px; background: #117865; display: grid; place-items: center; border-left: 1px solid #fff; }

.datapane { width: 181px; display: flex; flex-direction: column; border-left: 1px solid #d2d0ce; padding: 0 4px 8px; }
.datapane header { display: flex; justify-content: space-between; align-items: center; height: 38px; padding: 0 3px 0 4px; }
.datapane h2 { font-size: 15px; line-height: 20px; font-weight: 600; color: #252423; }
.find { flex: none; height: 27px; margin-top: 7px; display: flex; align-items: center; gap: 6px; padding-left: 7px; border: 1px solid #666; border-radius: 2px; background: #fff; font-size: 13px; }
.find input { width: 100px; }
.find input::placeholder { color: #444; opacity: 1; }
.treewrap { flex: 1; min-height: 0; display: flex; margin-top: 8px; }
.tree { flex: 1; min-width: 0; overflow: hidden; padding-top: 2px; font: 11px/16px "Noto Sans", sans-serif; }
.tree label, .node { height: 24px; display: flex; align-items: center; white-space: nowrap; }
.tree label { padding-left: 34px; gap: 7px; }
.tree input { appearance: none; flex: none; width: 12px; height: 12px; margin: 0; border: 1px solid #777; border-radius: 2px; }
.tree label svg { margin-right: -1px; }
.node { padding-left: 3px; gap: 5px; }
.node .tw { margin-right: -2px; }
.dots { margin-left: auto; padding-right: 2px; letter-spacing: 1px; }
.scroll { width: 8px; height: 395px; background: #c8c6c4; }

.status { flex: none; height: 25px; display: flex; justify-content: space-between; align-items: center; padding: 0 23px 0 5px; border-top: 1px solid #dcdad8; color: #484644; }
.zoom { display: flex; align-items: center; gap: 5px; }
.pct { margin: 0 14px 0 12px; }
.zoom input { appearance: none; width: 100px; height: 12px; background: linear-gradient(#666, #666) 50px 50%/1px 5px no-repeat, linear-gradient(#666, #666) 0 50%/100% 1px no-repeat; margin: 0; }
.zoom input::-webkit-slider-thumb { appearance: none; width: 4px; height: 11px; background: #605e5c; }

.taskbar { flex: none; height: 48px; display: flex; align-items: center; background: #202022; color: #fff; box-shadow: 0 -1px #000; }
.weather { flex: 0 0 329px; display: flex; align-items: center; gap: 6px; padding-left: 18px; color: #ddd; font-size: 11px; }
.weather b { font-weight: 600; color: #fff; }
.apps { display: flex; align-items: center; gap: 3px; }
.apps button { width: 41px; height: 42px; display: grid; place-items: center; border-radius: 4px; position: relative; }
.apps .start { width: 44px; }
.task-search { width: 220px; height: 32px; display: flex; align-items: center; gap: 10px; padding: 0 3px 0 12px; border: 1px solid #505052; border-radius: 16px; background: #3b3b3d; font-size: 13px; }
.task-search input { flex: 1; }
.task-search input::placeholder { color: #ccc; opacity: 1; }
.apps .active { background: #343436; box-shadow: inset 0 0 0 1px #444; }
.active::after, .open::after { content: ""; position: absolute; bottom: 0; left: 50%; width: 6px; height: 3px; margin-left: -3px; border-radius: 2px; background: #999; }
.active::after { width: 16px; margin-left: -8px; background: #4cc2ff; }
.pf { font: 9px "Open Sans", sans-serif; fill: #fff; text-anchor: middle; }
.tray { margin-left: auto; display: flex; align-items: center; gap: 8px; padding-right: 20px; }
.tray .cloud { margin: 0 7px 0 10px; }
.tray svg:nth-child(4) { margin-left: 7px; }
.tray p { margin-left: 11px; text-align: right; font-size: 11px; }
.count { width: 16px; height: 16px; border-radius: 50%; background: #4cc2ff; color: #111; font-size: 10px; text-align: center; }
```
